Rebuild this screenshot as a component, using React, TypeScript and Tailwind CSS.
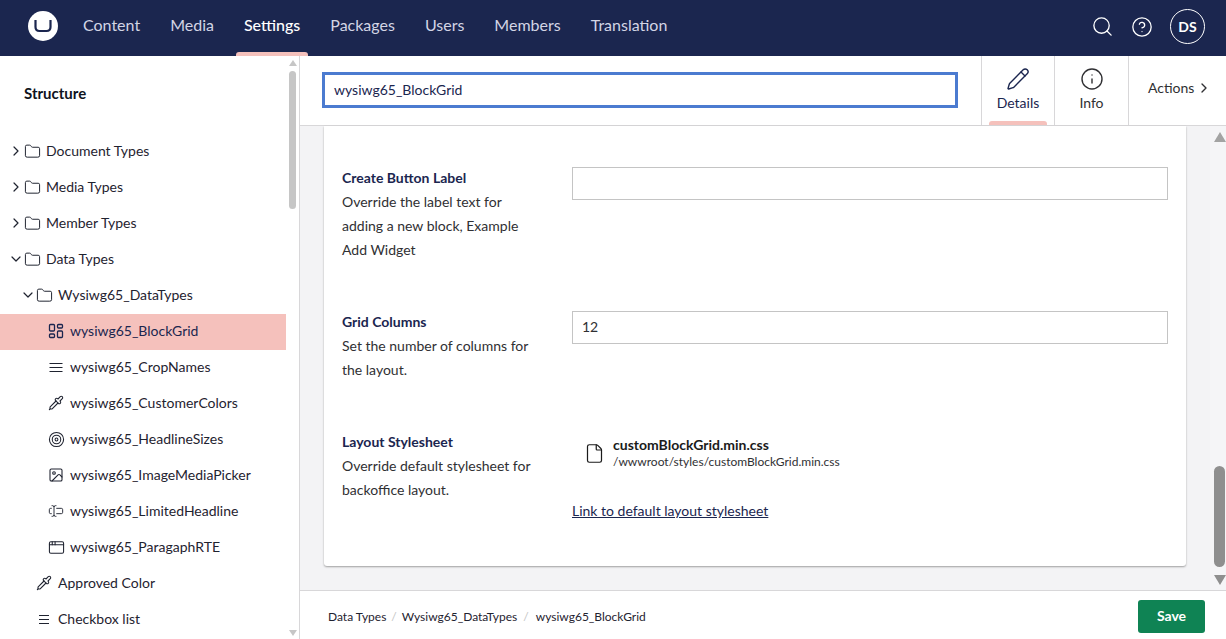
import React from "react";
import { ChevronRight, ChevronDown, Folder, Pipette, Target, Image, AppWindow, Search, CircleHelp, Pencil, Info, File, TextCursorInput } from "lucide-react";

const nav = ["Content", "Media", "Settings", "Packages", "Users", "Members", "Translation"];

function GridIcon() {
  return (
    <svg width="16" height="16" viewBox="0 0 16 16" fill="none" stroke="currentColor" strokeWidth="1.3">
      <rect x="1.5" y="1.5" width="5" height="6.5" rx="1" />
      <rect x="9.5" y="1.5" width="5" height="3.5" rx="1" />
      <rect x="1.5" y="11" width="5" height="3.5" rx="1" />
      <rect x="9.5" y="8" width="5" height="6.5" rx="1" />
    </svg>
  );
}

function LinesIcon({ w }: { w: number }) {
  return (
    <svg width="16" height="16" viewBox="0 0 16 16" fill="none" stroke="currentColor" strokeWidth="1.2">
      <path d={`M${8 - w / 2} 4.5H${8 + w / 2}M${8 - w / 2} 8.5H${8 + w / 2}M${8 - w / 2} 12.5H${8 + w / 2}`} />
    </svg>
  );
}

function Row({ pad, chevron, icon, label, active }: { pad: string; chevron?: "r" | "d"; icon: React.ReactNode; label: string; active?: boolean }) {
  return (
    <div className={`flex h-9 items-center pb-[2px] text-sm ${pad} ${active ? "bg-[#f5c1bc] text-[#1b264f]" : "text-[#1f2330]"}`}>
      <span className="flex w-[12px] justify-center">
        {chevron === "r" && <ChevronRight size={16} strokeWidth={1.8} className="shrink-0" />}
        {chevron === "d" && <ChevronDown size={16} strokeWidth={1.8} className="shrink-0" />}
      </span>
      <span className="ml-[2px] flex w-[16px] justify-center">{icon}</span>
      <span className="ml-[6px] whitespace-nowrap">{label}</span>
    </div>
  );
}

function Field({ title, desc, children, className }: { title: string; desc: string[]; children: React.ReactNode; className: string }) {
  return (
    <div className={`flex ${className}`}>
      <div className="w-[230px] pr-4 text-sm leading-6 text-[#303033]">
        <div className="font-bold text-[#1b264f]">{title}</div>
        {desc.map((d) => (
          <div key={d} className="whitespace-nowrap">{d}</div>
        ))}
      </div>
      <div className="w-[596px]">{children}</div>
    </div>
  );
}

export default function App() {
  const folder = <Folder size={17} strokeWidth={1.4} className="shrink-0" />;
  const pip = <Pipette size={16} strokeWidth={1.6} className="shrink-0" />;
  return (
    <div className="flex h-[639px] w-[1226px] flex-col overflow-hidden bg-white font-['Lato','Noto_Sans',sans-serif]">
      <header className="flex h-14 shrink-0 items-center bg-[#1b264f] pl-7 pr-[21px]">
        <div className="mb-[4px] flex h-[30px] w-[30px] items-center justify-center rounded-full bg-white">
          <svg width="18" height="14" viewBox="0 0 18 14" fill="none" stroke="#1b264f" strokeWidth="2.2">
            <path d="M1.5 1 L1.5 8 Q1.5 12 5.5 12 L12.5 12 Q16.5 12 16.5 8 L16.5 1" />
          </svg>
        </div>
        <nav className="ml-[10px] flex h-14 items-center">
          {nav.map((n) => (
            <div key={n} className={`relative flex h-14 items-center px-[15px] pb-[6px] text-base ${n === "Settings" ? "font-medium text-white" : "text-[#d3d5e5]"}`}>
              {n === "Settings" && <span className="absolute bottom-0 left-[7px] right-[7px] h-[4px] rounded-t-[3px] bg-[#f5c1bc]" />}
              {n}
            </div>
          ))}
        </nav>
        <div className="ml-auto flex items-center pb-[3px] text-white">
          <Search size={23} strokeWidth={1.4} className="mr-[17px]" />
          <CircleHelp size={22} strokeWidth={1.4} className="mr-[17px]" />
          <div className="flex h-[35px] w-[35px] items-center justify-center rounded-full border border-white text-sm font-bold">DS</div>
        </div>
      </header>

      <div className="flex min-h-0 flex-1">
        <aside className="flex w-[300px] shrink-0 border-r border-[#d8d7d9]">
          <div className="w-[286px] shrink-0 overflow-hidden">
            <div className="flex h-[78px] items-center pb-[3px] pl-6 text-[15px] font-bold text-[#0f1320]">Structure</div>
            <Row pad="pl-[10px]" chevron="r" icon={folder} label="Document Types" />
            <Row pad="pl-[10px]" chevron="r" icon={folder} label="Media Types" />
            <Row pad="pl-[10px]" chevron="r" icon={folder} label="Member Types" />
            <Row pad="pl-[10px]" chevron="d" icon={folder} label="Data Types" />
            <Row pad="pl-[22px]" chevron="d" icon={folder} label="Wysiwg65_DataTypes" />
            <Row pad="pl-[34px]" active icon={<GridIcon />} label="wysiwg65_BlockGrid" />
            <Row pad="pl-[34px]" icon={<LinesIcon w={13} />} label="wysiwg65_CropNames" />
            <Row pad="pl-[34px]" icon={pip} label="wysiwg65_CustomerColors" />
            <Row pad="pl-[34px]" icon={<Target size={17} strokeWidth={1.5} className="shrink-0" />} label="wysiwg65_HeadlineSizes" />
            <Row pad="pl-[34px]" icon={<Image size={16} strokeWidth={1.6} className="shrink-0" />} label="wysiwg65_ImageMediaPicker" />
            <Row pad="pl-[34px]" icon={<TextCursorInput size={16} strokeWidth={1.4} className="shrink-0" />} label="wysiwg65_LimitedHeadline" />
            <Row pad="pl-[34px]" icon={<AppWindow size={17} strokeWidth={1.5} className="shrink-0" />} label="wysiwg65_ParagaphRTE" />
            <Row pad="pl-[22px]" icon={pip} label="Approved Color" />
            <Row pad="pl-[22px]" icon={<LinesIcon w={10} />} label="Checkbox list" />
          </div>
          <div className="flex w-[13px] flex-col items-center pt-[4px]">
            <div className="h-0 w-0 border-x-[4.5px] border-b-[6px] border-x-transparent border-b-[#c6c6c6]" />
            <div className="mt-[5px] h-[138px] w-[7px] rounded-full bg-[#c6c6c6]" />
            <div className="mt-auto mb-[3px] h-0 w-0 border-x-[4.5px] border-t-[6px] border-x-transparent border-t-[#c6c6c6]" />
          </div>
        </aside>

        <main className="flex min-w-0 flex-1 flex-col">
          <div className="flex h-[70px] shrink-0 items-stretch border-b border-[#d8d7d9] bg-white">
            <div className="flex w-[681px] items-start pl-[22px] pt-[16px]">
              <div className="flex h-[36px] w-[636px] items-center border-[3px] border-[#4b7bd0] pl-[9px] text-sm text-[#1b264f]">wysiwg65_BlockGrid</div>
            </div>
            <div className="relative flex w-[74px] flex-col items-center border-x border-[#d8d7d9] pt-[11px] text-sm text-[#1b264f]">
              <Pencil size={24} strokeWidth={1.4} className="shrink-0" />
              <span className="mt-[2px]">Details</span>
              <span className="absolute bottom-0 left-[7px] right-[7px] h-[4px] rounded-t-[3px] bg-[#f5c1bc]" />
            </div>
            <div className="flex w-[74px] flex-col items-center border-r border-[#d8d7d9] pt-[11px] text-sm text-[#303033]">
              <Info size={24} strokeWidth={1.4} className="shrink-0" />
              <span className="mt-[2px]">Info</span>
            </div>
            <div className="flex flex-1 items-center pb-[6px] pl-[19px] text-sm text-[#303033]">
              Actions
              <ChevronRight size={16} strokeWidth={2} className="ml-[2px]" />
            </div>
          </div>

          <div className="flex min-h-0 flex-1 bg-[#f3f3f5]">
            <div className="min-w-0 flex-1 pl-6 pr-6">
              <div className="h-[440px] rounded-b-[3px] bg-white pl-[18px] pt-[40px] shadow-[0_1px_2px_rgba(0,0,0,0.35)]">
                <Field className="mb-[48px]" title="Create Button Label" desc={["Override the label text for", "adding a new block, Example", "Add Widget"]}>
                  <div className="mt-px h-[33px] border border-[#c4c4c4] bg-white" />
                </Field>
                <Field className="mb-[48px]" title="Grid Columns" desc={["Set the number of columns for", "the layout."]}>
                  <div className="mt-px flex h-[33px] items-center border border-[#c4c4c4] bg-white pb-[2px] pl-[9px] text-sm text-[#303033]">12</div>
                </Field>
                <Field className="" title="Layout Stylesheet" desc={["Override default stylesheet for", "backoffice layout."]}>
                  <div className="flex items-center pl-[12px] pt-[6px] text-[#1b1b1b]">
                    <File size={21} strokeWidth={1.4} className="shrink-0" />
                    <div className="ml-[8px]">
                      <div className="text-sm leading-[18px] font-bold">customBlockGrid.min.css</div>
                      <div className="text-xs leading-[16px] text-[#303033]">/wwwroot/styles/customBlockGrid.min.css</div>
                    </div>
                  </div>
                  <div className="mt-[29px] text-sm leading-6 text-[#1b264f] underline">Link to default layout stylesheet</div>
                </Field>
              </div>
            </div>
            <div className="flex w-4 shrink-0 flex-col items-center bg-[#f5f5f7] pl-[3px] pt-[6px]">
              <div className="h-0 w-0 border-x-[6.5px] border-b-[10px] border-x-transparent border-b-[#a3a3a3]" />
              <div className="mt-auto h-[101px] w-[11px] rounded-full bg-[#8f8f8f]" />
              <div className="mt-[8px] mb-[5px] h-0 w-0 border-x-[6.5px] border-t-[10px] border-x-transparent border-t-[#8f8f8f]" />
            </div>
          </div>

          <footer className="flex h-[49px] shrink-0 items-center border-t border-[#d8d7d9] bg-white pl-7 pr-[21px]">
            <div className="flex items-center pt-[4px] text-xs text-[#1f2330]">
              <span>Data Types</span>
              <span className="mx-[5px] text-[#c4c4c4]">/</span>
              <span>Wysiwg65_DataTypes</span>
              <span className="ml-[6px] mr-[7px] text-[#c4c4c4]">/</span>
              <span>wysiwg65_BlockGrid</span>
            </div>
            <div className="mt-[2px] ml-auto flex h-[33px] w-[67px] items-center justify-center rounded-[3px] bg-[#0f8354] text-sm font-bold text-white">Save</div>
          </footer>
        </main>
      </div>
    </div>
  );
}
